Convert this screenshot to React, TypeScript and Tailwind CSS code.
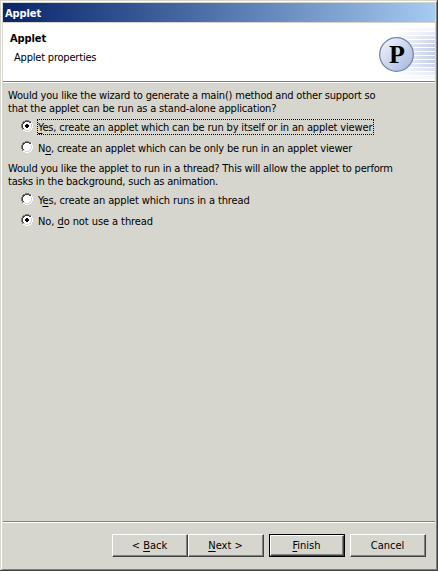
import type { ReactNode } from "react";

const stripes = [
  [5, 0.2], [9, 0.4], [13, 0.65], [17, 0.85], [21, 1], [25, 1], [29, 1],
  [33, 1], [37, 1], [41, 0.85], [45, 0.65], [49, 0.4], [53, 0.2],
];

function Radio({ checked }: { checked?: boolean }) {
  return (
    <svg width="12" height="12" viewBox="0 0 12 12" shapeRendering="crispEdges" className="shrink-0">
      <path fill="#fff" d="M4 2h4v1h2v1h1v4h-1v2h-2v1h-4v-1h-2v-2h-1v-4h1v-1h2z" />
      <path fill="#808080" d="M4 0h4v1h-4zM2 1h2v1h-2zM8 1h2v1h-2zM1 2h1v2h-1zM0 4h1v4h-1zM1 8h1v2h-1z" />
      <path fill="#404040" d="M4 1h4v1h-4zM2 2h2v1h-2zM8 2h2v1h-2zM2 3h1v1h-1zM1 4h1v4h-1zM2 8h1v1h-1z" />
      <path fill="#d6d6ce" d="M10 4h1v4h-1zM9 8h1v1h-1zM8 9h2v1h-2zM4 10h4v1h-4zM2 9h2v1h-2z" />
      <path fill="#fff" d="M10 2h1v2h-1zM11 4h1v4h-1zM10 8h1v2h-1zM8 10h2v1h-2zM4 11h4v1h-4zM2 10h2v1h-2z" />
      {checked && <path fill="#000" d="M5 4h2v1h1v2h-1v1h-2v-1h-1v-2h1z" />}
    </svg>
  );
}

function Key({ children }: { children: ReactNode }) {
  return <span className="underline decoration-1 underline-offset-2">{children}</span>;
}

function Option({ checked, focused, children }: { checked?: boolean; focused?: boolean; children: ReactNode }) {
  return (
    <div className="flex h-4 items-start gap-1">
      <div className="pt-px">
        <Radio checked={checked} />
      </div>
      <div className={"h-4 border border-dotted leading-[16px] " + (focused ? "w-[337px] border-black" : "border-transparent")}>
        {children}
      </div>
    </div>
  );
}

function Button({ primary, children }: { primary?: boolean; children: ReactNode }) {
  return (
    <div className={"h-[23px] w-[76px] " + (primary ? "border border-black" : "")}>
      <div className="h-full border border-t-white border-l-white border-r-[#404040] border-b-[#404040]">
        <div className="flex h-full items-center justify-center border-r border-b border-[#808080]">
          <span>{children}</span>
        </div>
      </div>
    </div>
  );
}

export default function App() {
  return (
    <div className="h-[571px] w-[438px] overflow-hidden border-r border-b border-[#404040] bg-[#d6d6ce] pt-px pl-px font-['DejaVu_Sans_Condensed','DejaVu_Sans',sans-serif] text-[11px] leading-[13px] whitespace-nowrap text-black">
      <div className="flex h-full flex-col border border-t-white border-l-white border-r-[#808080] border-b-[#808080] pt-px pr-px pl-px">
        <div className="flex h-[19px] shrink-0 items-center bg-linear-to-r from-[#0a246a] to-[#a6caf0] pt-px pl-0.5 font-bold tracking-[-0.1px] text-white">
          <span>Applet</span>
        </div>
        <div className="mt-px flex h-[58px] shrink-0 justify-between bg-white">
          <div className="pt-[9px] pl-[7px]">
            <div className="font-bold tracking-[-0.1px]">Applet</div>
            <div className="pt-1.5 pl-1 tracking-[-0.2px]">Applet properties</div>
          </div>
          <svg width="64" height="58" viewBox="0 0 64 58">
            <defs>
              <linearGradient id="fade">
                <stop offset="0" stopColor="#c5cde9" stopOpacity="0" />
                <stop offset="1" stopColor="#c5cde9" />
              </linearGradient>
              <linearGradient id="disc" x1="0" y1="0" x2="1" y2="1">
                <stop offset="0" stopColor="#f4f7fd" />
                <stop offset="1" stopColor="#a5b5dc" />
              </linearGradient>
            </defs>
            {stripes.map(([y, opacity]) => (
              <rect key={y} x="18" y={y} width="46" height="3" fill="url(#fade)" opacity={opacity} />
            ))}
            <circle cx="25.5" cy="31.5" r="16.8" fill="url(#disc)" stroke="#7187aa" strokeWidth="1.3" />
            <text x="26" y="40" textAnchor="middle" className="font-['Liberation_Serif',serif] text-[26px] font-bold">P</text>
          </svg>
        </div>
        <div className="h-0.5 shrink-0 border-t border-b border-t-[#808080] border-b-white" />
        <div className="flex-1 pt-1.5 pl-[5px]">
          <p className="tracking-[-0.18px]">Would you like the wizard to generate a main() method and other support so<br />that the applet can be run as a stand-alone application?</p>
          <div className="flex flex-col gap-[5px] pt-1 pl-[13px]">
            <div className="tracking-[-0.16px]">
              <Option checked focused><Key>Y</Key>es, create an applet which can be run by itself or in an applet viewer</Option>
            </div>
            <div className="tracking-[-0.2px]">
              <Option>N<Key>o</Key>, create an applet which can be only be run in an applet viewer</Option>
            </div>
          </div>
          <p className="pt-1.5 tracking-[-0.21px]">Would you like the applet to run in a thread? This will allow the applet to perform<br />tasks in the background, such as animation.</p>
          <div className="flex flex-col gap-[5px] pt-1 pl-[13px]">
            <div className="tracking-[-0.13px]">
              <Option>Y<Key>e</Key>s, create an applet which runs in a thread</Option>
            </div>
            <div className="tracking-[-0.08px]">
              <Option checked>No, <Key>d</Key>o not use a thread</Option>
            </div>
          </div>
        </div>
        <div className="h-0.5 shrink-0 border-t border-b border-t-[#808080] border-b-white" />
        <div className="flex h-[46px] shrink-0 justify-end pt-[11px] pr-[9px]">
          <Button>&lt; <Key>B</Key>ack</Button>
          <Button><Key>N</Key>ext &gt;</Button>
          <div className="w-[5px]" />
          <Button primary><Key>F</Key>inish</Button>
          <div className="w-[5px]" />
          <Button>Cancel</Button>
        </div>
      </div>
    </div>
  );
}
